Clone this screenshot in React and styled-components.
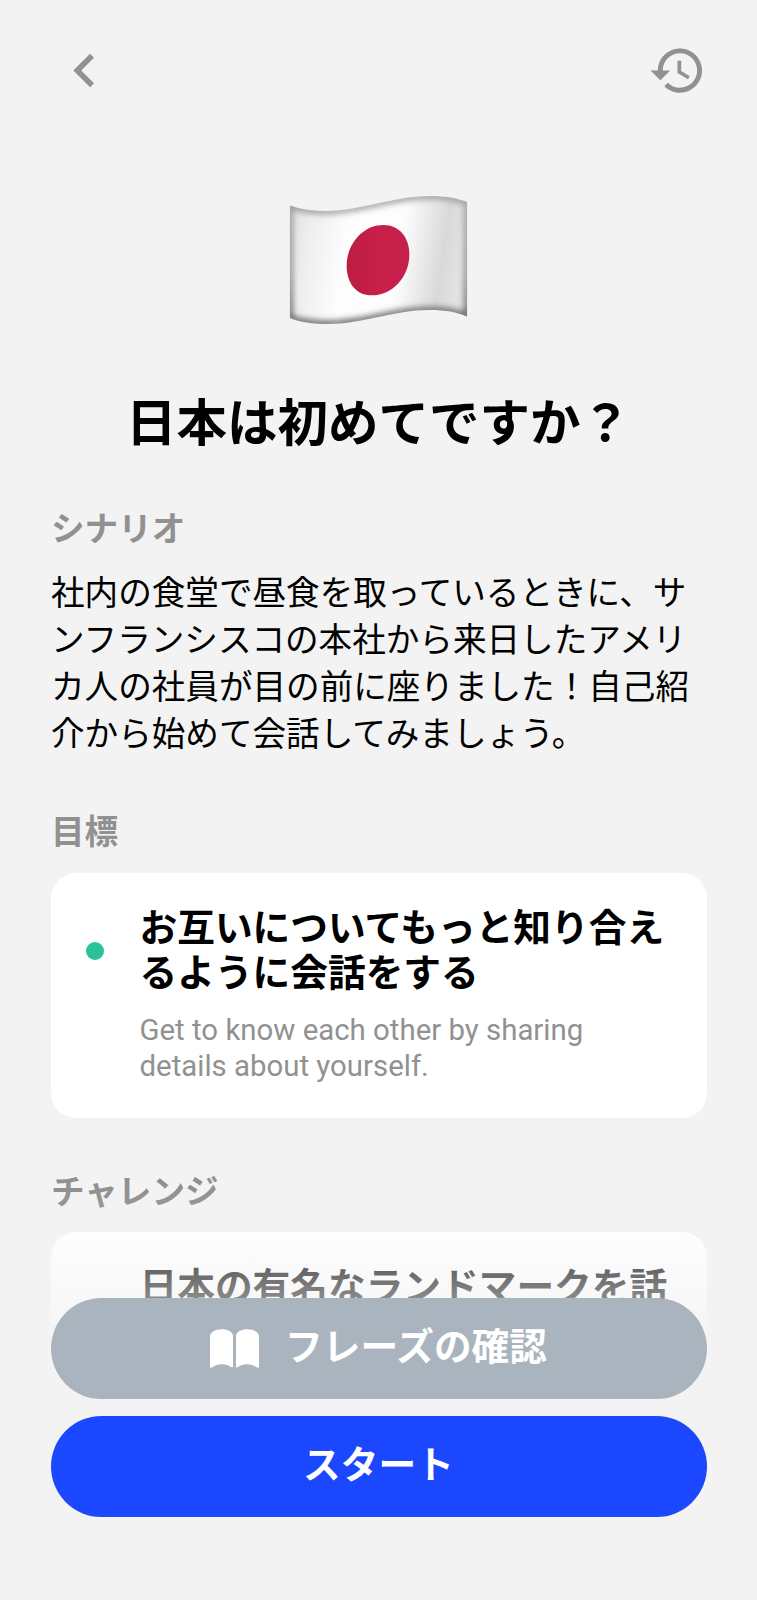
import React from 'react';
import styled, { createGlobalStyle } from 'styled-components';

const GlobalStyle = createGlobalStyle`
  * {
    box-sizing: border-box;
  }

  body {
    margin: 0;
    background: #f3f3f3;
  }
`;

const Screen = styled.div`
  position: relative;
  width: 757px;
  height: 1600px;
  overflow: hidden;
  background: #f3f3f3;
  color: #000;
  font-family: Roboto, 'Noto Sans CJK JP', sans-serif;
`;

const Header = styled.header`
  display: flex;
  align-items: center;
  justify-content: space-between;
  height: 140px;
  padding: 0 50.5px;
`;

const IconButton = styled.button`
  display: flex;
  padding: 0;
  border: none;
  background: none;
  color: #919191;
  cursor: pointer;
`;

const Content = styled.main`
  display: flex;
  flex-direction: column;
  padding: 40px 50.5px 0;
`;

const Flag = styled.svg`
  align-self: center;
  width: 220px;
  height: 160px;
`;

const Title = styled.h1`
  margin: 48px 0 0;
  font-size: 50.5px;
  font-weight: 700;
  line-height: 72px;
  text-align: center;
  white-space: nowrap;
`;

const SectionTitle = styled.h2`
  margin: ${props => props.$top}px 0 0;
  padding-left: 0.5px;
  color: #919191;
  font-size: 33.6px;
  font-weight: 700;
  line-height: 48px;
`;

const Scenario = styled.p`
  margin: 16px 0 0;
  padding-left: 0.5px;
  font-size: 33.6px;
  line-height: 47px;
  white-space: nowrap;
`;

const Card = styled.article`
  display: flex;
  margin-top: ${props => props.$top}px;
  height: 245px;
  padding: 33px 36px 0 35px;
  border-radius: 25px;
  background: #fff;
`;

const Dot = styled.span`
  flex: none;
  width: 18px;
  height: 18px;
  margin: 36px 36px 0 0;
  border-radius: 50%;
  background: ${props => props.$color};
`;

const CardTitle = styled.h3`
  margin: 0;
  font-size: 37.7px;
  font-weight: 700;
  line-height: 45px;
  white-space: nowrap;
`;

const CardText = styled.p`
  margin: 16px 0 0;
  color: #919191;
  font-size: 29.4px;
  line-height: 36px;
  white-space: nowrap;
`;

const Footer = styled.footer`
  position: absolute;
  left: 0;
  right: 0;
  bottom: 0;
  display: flex;
  flex-direction: column;
  gap: 17px;
  height: 420px;
  padding: 118px 50.5px 0;
  background: linear-gradient(
    rgba(243, 243, 243, 0) 10px,
    rgba(243, 243, 243, 0.15) 52px,
    rgba(243, 243, 243, 0.42) 90px,
    rgba(243, 243, 243, 0.56) 117px,
    #f3f3f3 180px
  );
`;

const Button = styled.button`
  display: flex;
  align-items: center;
  justify-content: center;
  gap: 26px;
  height: 101px;
  padding: 0 0 4px;
  border: none;
  border-radius: 51px;
  background: ${props => (props.$primary ? '#1b47ff' : '#aab4be')};
  color: #fff;
  font-family: inherit;
  font-size: 37.7px;
  font-weight: 700;
  line-height: 50px;
  cursor: pointer;
`;

const BookSvg = styled.svg`
  width: 49px;
  height: 39px;
  margin-top: 3px;
`;

const BackIcon = () => (
  <svg width="67" height="67" viewBox="0 0 24 24" fill="currentColor">
    <path d="M15.41 7.41 14 6l-6 6 6 6 1.41-1.41L10.83 12z" />
  </svg>
);

const HistoryIcon = () => (
  <svg width="59" height="59" viewBox="0 0 24 24" fill="currentColor">
    <path d="M13 3c-4.97 0-9 4.03-9 9H1l3.89 3.89.07.14L9 12H6c0-3.87 3.13-7 7-7s7 3.13 7 7-3.13 7-7 7c-1.93 0-3.68-.79-4.94-2.06l-1.42 1.42C8.27 19.99 10.51 21 13 21c4.97 0 9-4.03 9-9s-4.03-9-9-9zm-1 5v5l4.28 2.54.72-1.21-3.5-2.08V8z" />
  </svg>
);

const BookIcon = () => (
  <BookSvg viewBox="0 0 49 39" fill="#fff">
    <path d="M0 7.500C0 3.500 5 .3 11.500 .3c6 0 11.500 2.700 11.500 6.700V37.500c0 1-.7 1.300-1.500.8-2.800-1.900-5.800-3-9.500-3-3.700 0-7 1.200-10 3.200C1 39 0 38.800 0 37.500z" />
    <path d="M49 7.500c0-4-5-7.200-11.500-7.200-6 0-11.500 2.700-11.500 6.700V37.500c0 1 .7 1.300 1.500.8 2.800-1.900 5.800-3 9.500-3 3.700 0 7 1.200 10 3.200 1 .5 2 .3 2-1z" />
  </BookSvg>
);

const flagShape =
  'M59 76C95 90 130 93 170 93C275 92 370 48 480 48C525 48 560 54 592 66V410C560 396 525 390 480 390C370 390 280 432 175 432C125 432 90 426 59 414Z';

const JapanFlag = () => (
  <Flag viewBox="-3 0 660 480">
    <defs>
      <linearGradient id="cloth" x1="0" x2="1" y1="0" y2="0.1">
        <stop offset="0" stopColor="#dedede" />
        <stop offset="0.12" stopColor="#ededed" />
        <stop offset="0.35" stopColor="#fdfdfd" />
        <stop offset="0.66" stopColor="#fdfdfd" />
        <stop offset="0.8" stopColor="#e8e8e8" />
        <stop offset="0.9" stopColor="#d9d9d9" />
        <stop offset="1" stopColor="#e2e2e2" />
      </linearGradient>
      <linearGradient id="rim" x1="0" x2="0" y1="0" y2="1">
        <stop offset="0" stopColor="#999" />
        <stop offset="0.6" stopColor="#909090" />
        <stop offset="1" stopColor="#555" />
      </linearGradient>
      <linearGradient id="sun" x1="0" x2="1" y1="0" y2="0">
        <stop offset="0" stopColor="#bd1c40" />
        <stop offset="0.5" stopColor="#c72049" />
        <stop offset="1" stopColor="#c5204a" />
      </linearGradient>
      <clipPath id="flagClip">
        <path d={flagShape} />
      </clipPath>
      <filter id="soft" x="-10%" y="-10%" width="120%" height="120%">
        <feGaussianBlur stdDeviation="9" />
      </filter>
    </defs>
    <g clipPath="url(#flagClip)">
      <path d={flagShape} fill="url(#cloth)" />
      <path d={flagShape} fill="none" stroke="url(#rim)" strokeWidth="18" filter="url(#soft)" />
    </g>
    <path
      d="M340 135C389 135 418 173 418 224C418 291 366 346 306 346C257 346 230 308 230 257C230 190 280 135 340 135Z"
      fill="url(#sun)"
    />
  </Flag>
);

const App = () => {
  return (
    <Screen lang="ja">
      <GlobalStyle />
      <Header>
        <IconButton aria-label="戻る">
          <BackIcon />
        </IconButton>
        <IconButton aria-label="履歴">
          <HistoryIcon />
        </IconButton>
      </Header>

      <Content>
        <JapanFlag />
        <Title>日本は初めてですか？</Title>

        <SectionTitle $top={46}>シナリオ</SectionTitle>
        <Scenario>
          社内の食堂で昼食を取っているときに、サ
          <br />
          ンフランシスコの本社から来日したアメリ
          <br />
          カ人の社員が目の前に座りました！自己紹
          <br />
          介から始めて会話してみましょう。
        </Scenario>

        <SectionTitle $top={51}>目標</SectionTitle>
        <Card $top={16}>
          <Dot $color="#2bc298" />
          <div>
            <CardTitle>
              お互いについてもっと知り合え
              <br />
              るように会話をする
            </CardTitle>
            <CardText>
              Get to know each other by sharing
              <br />
              details about yourself.
            </CardText>
          </div>
        </Card>

        <SectionTitle $top={51}>チャレンジ</SectionTitle>
        <Card $top={15}>
          <Dot $color="transparent" />
          <CardTitle>日本の有名なランドマークを話</CardTitle>
        </Card>
      </Content>

      <Footer>
        <Button>
          <BookIcon />
          フレーズの確認
        </Button>
        <Button $primary>スタート</Button>
      </Footer>
    </Screen>
  );
};

export default App;
